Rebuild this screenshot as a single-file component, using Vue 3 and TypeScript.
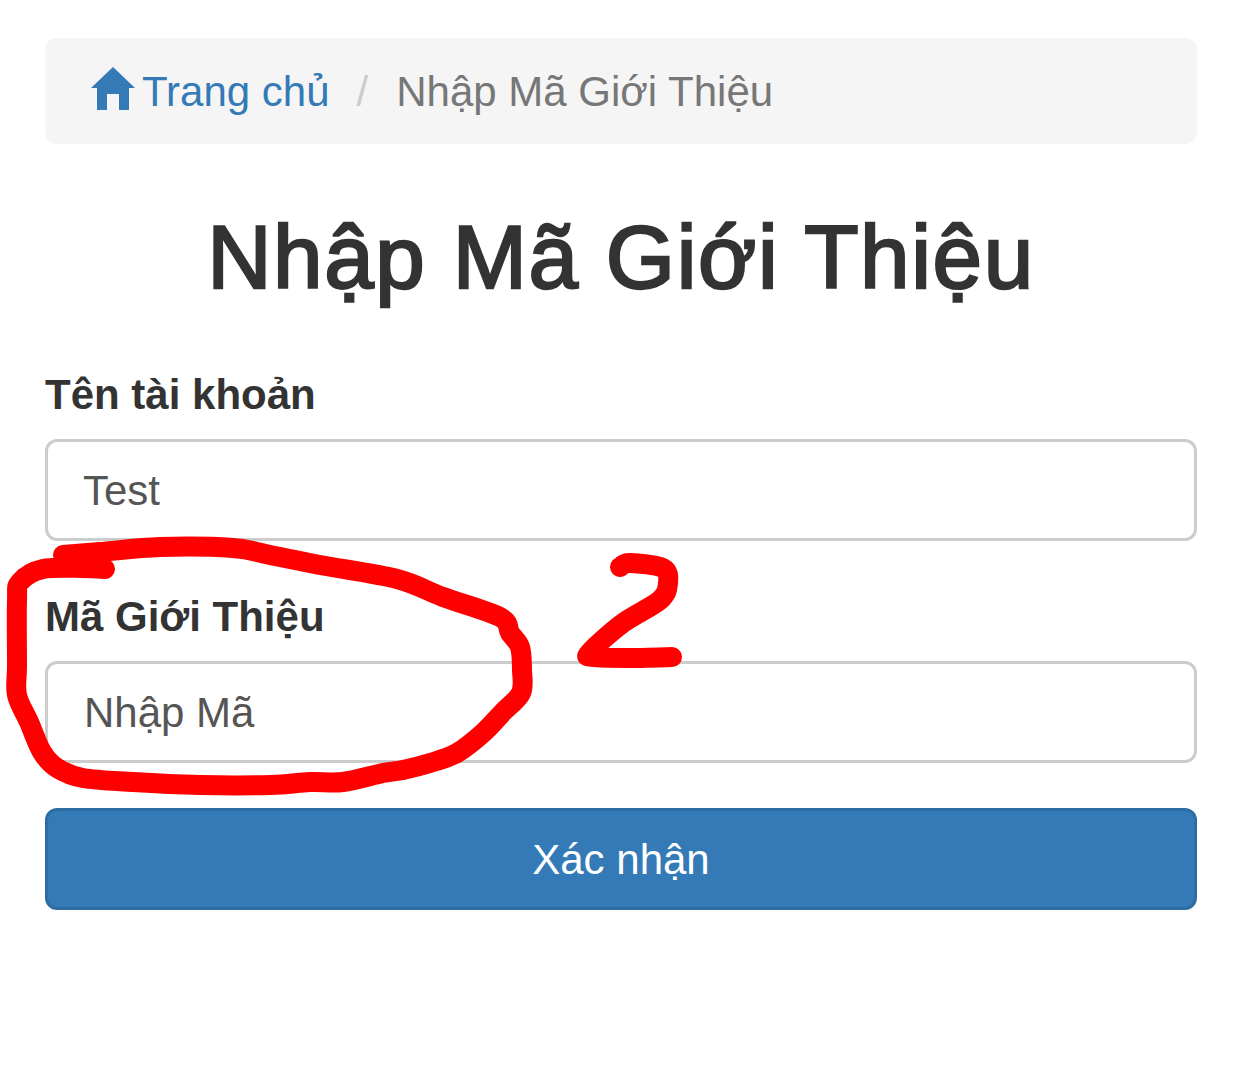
<script setup lang="ts">
import { ref } from 'vue'

type Pt = [number, number]

const username = ref('Test')
const code = ref('')

const circlePts: Pt[] = [
  [63, 555], [100, 552], [160, 547], [233, 548], [270, 555], [320, 565], [397, 579], [443, 597],
  [500, 617], [510, 633], [520, 647], [522, 670], [521, 693], [503, 712], [483, 733], [457, 753],
  [430, 763], [403, 770], [383, 773], [343, 782], [310, 782], [270, 785], [200, 785], [133, 782],
  [83, 778], [57, 768], [42, 752], [29, 722], [17, 695], [17, 665], [17, 600], [20, 582],
  [43, 569], [83, 568], [105, 569],
]
const twoPts: Pt[] = [
  [620, 567], [630, 563], [663, 568], [668, 583], [660, 600], [623, 623], [590, 652], [593, 657],
  [627, 658], [672, 657],
]

// hand-drawn look: run a catmull-rom spline through the traced points
function smooth(pts: Pt[]): string {
  let d = `M${pts[0][0]} ${pts[0][1]}`
  for (let i = 0; i < pts.length - 1; i++) {
    const p0 = pts[Math.max(i - 1, 0)]
    const p1 = pts[i]
    const p2 = pts[i + 1]
    const p3 = pts[Math.min(i + 2, pts.length - 1)]
    const c1x = p1[0] + (p2[0] - p0[0]) / 6
    const c1y = p1[1] + (p2[1] - p0[1]) / 6
    const c2x = p2[0] - (p3[0] - p1[0]) / 6
    const c2y = p2[1] - (p3[1] - p1[1]) / 6
    d += ` C${c1x.toFixed(1)} ${c1y.toFixed(1)} ${c2x.toFixed(1)} ${c2y.toFixed(1)} ${p2[0]} ${p2[1]}`
  }
  return d
}

const circlePath = smooth(circlePts)
const twoPath = smooth(twoPts)
</script>

<template>
  <div class="page">
    <nav class="breadcrumb">
      <a class="crumb-link" href="#">
        <svg class="home-icon" viewBox="0 0 44 44" aria-hidden="true">
          <path d="M22 0 L44 21 L38 21 L38 43 L28 43 L28 27 L16 27 L16 43 L6 43 L6 21 L0 21 Z" fill="#337ab7" />
        </svg>
        <span>Trang chủ</span>
      </a>
      <span class="crumb-sep">/</span>
      <span class="crumb-active">Nhập Mã Giới Thiệu</span>
    </nav>

    <h1 class="title">Nhập Mã Giới Thiệu</h1>

    <form class="form" @submit.prevent>
      <div class="form-group first">
        <label for="username">Tên tài khoản</label>
        <input id="username" v-model="username" class="filled" type="text" />
      </div>
      <div class="form-group">
        <label for="code">Mã Giới Thiệu</label>
        <input id="code" v-model="code" type="text" placeholder="Nhập Mã" />
      </div>
      <button class="submit" type="submit">Xác nhận</button>
    </form>

    <svg class="scribble" width="1242" height="1081" viewBox="0 0 1242 1081" aria-hidden="true">
      <path :d="circlePath" />
      <path :d="twoPath" />
    </svg>
  </div>
</template>

<style scoped>
.page {
  position: relative;
  box-sizing: border-box;
  height: 1081px;
  padding: 38px 45px 0;
  background: #fff;
  font-family: "Liberation Sans", Arial, sans-serif;
  color: #333;
}

.breadcrumb {
  display: flex;
  align-items: center;
  height: 106px;
  padding: 2px 45px 0;
  box-sizing: border-box;
  background: #f5f5f5;
  border-radius: 12px;
  font-size: 42px;
}

.crumb-link {
  display: flex;
  align-items: center;
  gap: 7px;
  color: #337ab7;
  text-decoration: none;
}

.home-icon {
  width: 44px;
  height: 44px;
  margin: -6px 0 0 1px;
}

.crumb-sep {
  margin: 0 28px 0 27px;
  color: #ccc;
}

.crumb-active {
  color: #777;
}

.title {
  margin: 64px 0 0;
  font-size: 89px;
  line-height: 99px;
  font-weight: 400;
  letter-spacing: 1.6px;
  -webkit-text-stroke: 2.4px #333;
  text-align: center;
}

.form {
  margin-top: 58px;
}

.form-group {
  margin-bottom: 45px;
}

.form-group.first {
  margin-bottom: 46px;
}

.form-group label {
  display: block;
  margin-bottom: 14px;
  font-size: 42px;
  line-height: 60px;
  font-weight: 700;
}

.form-group input {
  display: block;
  box-sizing: border-box;
  width: 100%;
  height: 102px;
  padding: 2px 36px 0;
  border: 3px solid #ccc;
  border-radius: 12px;
  background: #fff;
  color: #555;
  font: inherit;
  font-size: 42px;
  outline: none;
}

.form-group input.filled {
  padding-left: 35px;
}

.form-group input::placeholder {
  color: #555;
  opacity: 1;
}

.submit {
  display: block;
  box-sizing: border-box;
  width: 100%;
  height: 102px;
  padding: 2px 0 0;
  border: 3px solid #2e6da4;
  border-radius: 12px;
  background: #337ab7;
  color: #fff;
  font: inherit;
  font-size: 42px;
  cursor: pointer;
}

.scribble {
  position: absolute;
  top: 0;
  left: 0;
  pointer-events: none;
}

.scribble path {
  fill: none;
  stroke: #ff0000;
  stroke-width: 20;
  stroke-linecap: round;
  stroke-linejoin: round;
}
</style>
